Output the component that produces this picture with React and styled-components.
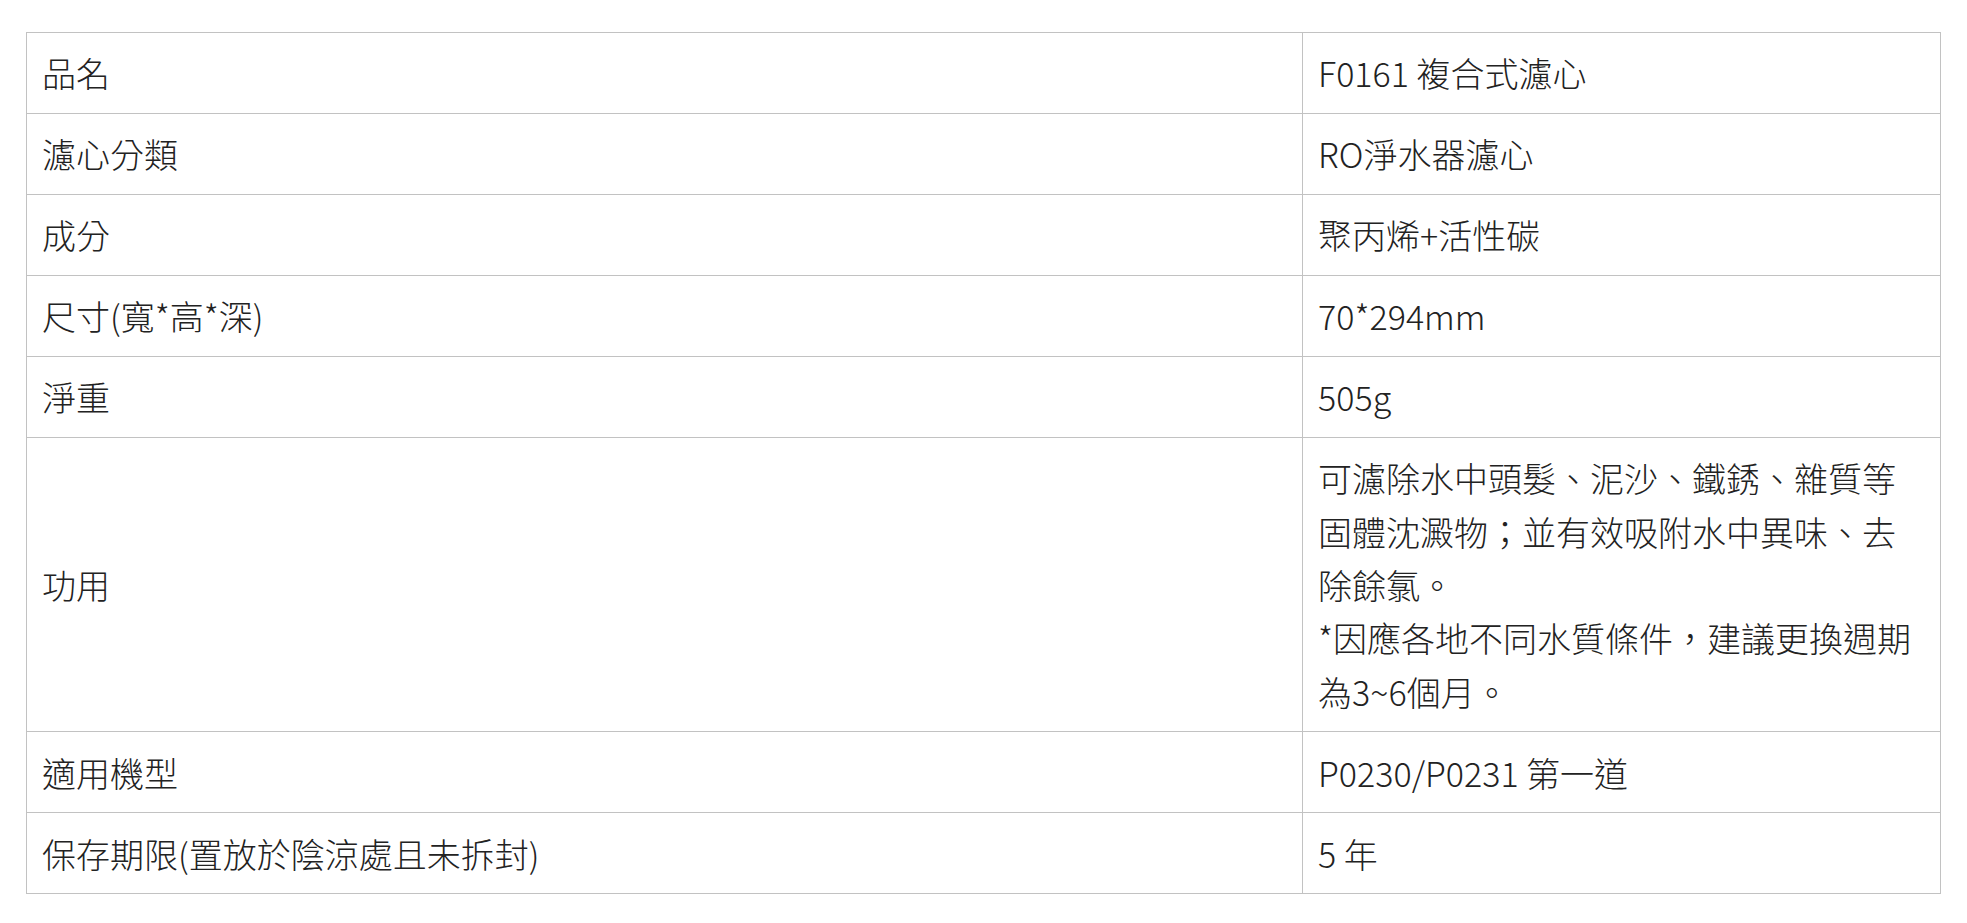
import React from 'react'
import styled, { createGlobalStyle } from 'styled-components'

const GlobalStyle = createGlobalStyle`
    html, body {
        margin: 0;
        padding: 0;
        background: #fff;
    }
    body {
        font-family: "Noto Sans CJK TC", "Noto Sans", sans-serif;
        color: #222;
    }
`

const Page = styled.div`
    padding: 32px 26px;
`

const SpecTable = styled.table`
    width: 100%;
    border-collapse: collapse;
    table-layout: fixed;
    border: 1px solid #c2c2c2;
`

const Cell = styled.td`
    border: 1px solid #c2c2c2;
    padding: 13.33px 15px;
    font-size: 34px;
    font-weight: 300;
    line-height: 53.33px;
    color: #222;
    vertical-align: middle;
    text-align: left;
    word-break: break-all;
`

const specs = [
    { label: '品名', value: 'F0161 複合式濾心' },
    { label: '濾心分類', value: 'RO淨水器濾心' },
    { label: '成分', value: '聚丙烯+活性碳' },
    { label: '尺寸(寬*高*深)', value: '70*294mm' },
    { label: '淨重', value: '505g' },
    {
        label: '功用',
        value: (
            <>
                可濾除水中頭髮、泥沙、鐵銹、雜質等固體沈澱物；並有效吸附水中異味、去除餘氯。
                <br />
                *因應各地不同水質條件，建議更換週期為3~6個月。
            </>
        ),
    },
    { label: '適用機型', value: 'P0230/P0231 第一道' },
    { label: '保存期限(置放於陰涼處且未拆封)', value: '5 年' },
]

function App() {
    return (
        <Page>
            <GlobalStyle />
            <SpecTable>
                <colgroup>
                    <col style={{ width: '66.67%' }} />
                    <col style={{ width: '33.33%' }} />
                </colgroup>
                <tbody>
                    {specs.map(row => (
                        <tr key={row.label}>
                            <Cell>{row.label}</Cell>
                            <Cell>{row.value}</Cell>
                        </tr>
                    ))}
                </tbody>
            </SpecTable>
        </Page>
    )
}

export default App
